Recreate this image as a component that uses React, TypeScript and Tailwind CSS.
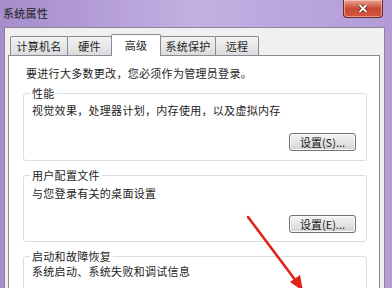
import React from 'react'

// ── Abas do dialogo ──────────────────────────────
const tabs = [
  { label: '计算机名', w: 'w-[58px]', active: false },
  { label: '硬件', w: 'w-[45px]', active: false },
  { label: '高级', w: 'w-[50px]', active: true },
  { label: '系统保护', w: 'w-[56px]', active: false },
  { label: '远程', w: 'w-[44px]', active: false },
]

function WinButton({ label }: { label: string }) {
  return (
    <button className="w-[67px] h-[18px] flex items-center justify-center rounded-[3px] border border-[#707070] bg-gradient-to-b from-[#f4f4f4] via-[#e6e6e6] to-[#d2d2d2] text-[11px] leading-none text-[#1a1a1a] shadow-[inset_0_0_0_1px_#fbfbfb]">
      {label}
    </button>
  )
}

function GroupBox({
  legend,
  children,
  className,
}: {
  legend: string
  children: React.ReactNode
  className: string
}) {
  return (
    <div className={`relative ml-[14px] mr-[12px] border border-[#d5dfe5] rounded-[3px] ${className}`}>
      <span className="absolute -top-[7px] left-[6px] bg-white px-[2px] text-[11px] leading-[13px] tracking-[0.3px] text-[#1e1e1e]">
        {legend}
      </span>
      {children}
    </div>
  )
}

export default function App() {
  return (
    <div className="relative w-[392px] h-[288px] overflow-hidden flex flex-col bg-gradient-to-r from-[#a58ccb] via-[#c4b0e2] to-[#b29bd6] font-['Noto_Sans_CJK_SC',sans-serif]">
      {/* Barra de titulo */}
      <div className="h-[27px] shrink-0 flex items-start justify-between">
        <span className="pl-[3px] pt-[6px] text-[11px] leading-[14px] tracking-[0.3px] text-[#1a1a1a]">系统属性</span>
        <div className="mr-[9px] w-[40px] h-[18px] rounded-b-[4px] border border-t-0 border-[#6b2a2a] bg-gradient-to-b from-[#e8a594] via-[#c94a35] to-[#d5563c] flex items-center justify-center shadow-[inset_0_0_0_1px_rgba(255,220,210,0.5)]">
          <svg width="10" height="9" viewBox="0 0 10 9">
            <path d="M1.5 1 L8.5 8 M8.5 1 L1.5 8" stroke="#4a1c14" strokeWidth="3.2" />
            <path d="M1.5 1 L8.5 8 M8.5 1 L1.5 8" stroke="#ffffff" strokeWidth="1.8" />
          </svg>
        </div>
      </div>

      {/* Corpo da janela */}
      <div className="flex-1 ml-[4px] mr-[7px] bg-[#f0f0f0] border-l border-t border-r border-[#8d8499] pl-[3px] pr-[4px] flex flex-col">
        {/* Abas */}
        <div className="h-[27px] shrink-0 flex items-end pl-[2px]">
          {tabs.map((t, i) =>
            t.active ? (
              <div
                key={t.label}
                className={`relative z-10 ${t.w} h-[22px] -ml-px -mb-px bg-white border border-b-0 border-[#898c95] rounded-t-[2px] flex items-start justify-center pt-[3px] text-[11px] leading-[14px] tracking-[0.3px] text-[#1e1e1e]`}
              >
                {t.label}
              </div>
            ) : (
              <div
                key={t.label}
                className={`${t.w} h-[19px] ${i > 0 ? '-ml-px' : ''} bg-gradient-to-b from-[#f3f3f3] to-[#dcdcdc] border border-b-0 border-[#898c95] rounded-t-[2px] flex items-center justify-center text-[11px] leading-[14px] tracking-[0.3px] text-[#1e1e1e]`}
              >
                {t.label}
              </div>
            )
          )}
        </div>

        {/* Painel da aba */}
        <div className="flex-1 bg-white border border-[#898c95] flex flex-col">
          <div className="pt-[10px] pl-[17px] text-[11px] leading-[14px] tracking-[0.3px] text-[#1e1e1e]">
            要进行大多数更改，您必须作为管理员登录。
          </div>

          <GroupBox legend="性能" className="mt-[13px] h-[68px] pt-[9px] pl-[8px] pr-[10px] flex flex-col">
            <span className="text-[11px] leading-[14px] tracking-[0.3px] text-[#1e1e1e]">视觉效果，处理器计划，内存使用，以及虚拟内存</span>
            <div className="mt-[16px] flex justify-end">
              <WinButton label="设置(S)..." />
            </div>
          </GroupBox>

          <GroupBox legend="用户配置文件" className="mt-[14px] h-[67px] pt-[10px] pl-[8px] pr-[10px] flex flex-col">
            <span className="text-[11px] leading-[14px] tracking-[0.3px] text-[#1e1e1e]">与您登录有关的桌面设置</span>
            <div className="mt-[15px] flex justify-end">
              <WinButton label="设置(E)..." />
            </div>
          </GroupBox>

          <GroupBox legend="启动和故障恢复" className="mt-[14px] h-[60px] pt-[7px] pl-[8px] pr-[10px] flex flex-col">
            <span className="text-[11px] leading-[14px] tracking-[0.3px] text-[#1e1e1e]">系统启动、系统失败和调试信息</span>
          </GroupBox>
        </div>
      </div>

      {/* Seta vermelha de anotacao */}
      <svg className="absolute left-0 top-0 pointer-events-none" width="392" height="288" viewBox="0 0 392 288">
        <line x1="248" y1="217" x2="296" y2="281" stroke="#e3221c" strokeWidth="2.6" strokeLinecap="round" />
        <polygon points="303,291 290,282 300,275" fill="#e3221c" />
      </svg>
    </div>
  )
}
